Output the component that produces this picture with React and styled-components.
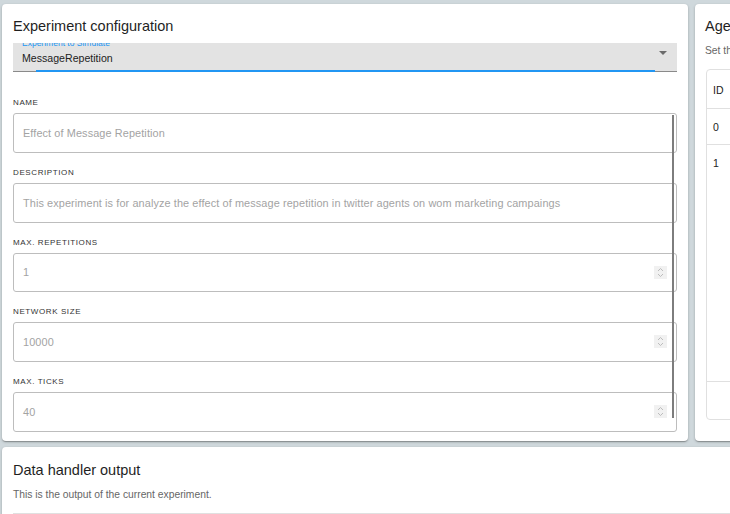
import React from "react";
import styled, { createGlobalStyle } from "styled-components";

const Global = createGlobalStyle`
  html, body { margin: 0; padding: 0; }
  body {
    background: #cfd8dc;
    font-family: "Liberation Sans", Arial, sans-serif;
    overflow: hidden;
    width: 730px;
    height: 514px;
  }
`;

const Page = styled.div`
  padding: 4px 0 0 2px;
  display: flex;
  flex-direction: column;
  gap: 6px;
  width: 1200px;
`;

const TopRow = styled.div`
  display: flex;
  gap: 7px;
  align-items: flex-start;
`;

const Card = styled.section`
  background: #fff;
  border-radius: 4px;
  box-shadow: 0 1px 3px rgba(0, 0, 0, 0.2), 0 1px 1px rgba(0, 0, 0, 0.14),
    0 2px 1px -1px rgba(0, 0, 0, 0.12);
  width: ${(p) => p.$w}px;
  height: ${(p) => (p.$h ? `${p.$h}px` : "auto")};
  display: flex;
  flex-direction: column;
  overflow: hidden;
  box-sizing: border-box;
`;

const Title = styled.h2`
  margin: 0;
  font-weight: 400;
  font-size: 14.5px;
  color: #1f1f1f;
  padding: ${(p) => p.$pad || "14px 11px 0"};
  line-height: 17px;
  white-space: nowrap;
`;

const Sub = styled.p`
  margin: 0;
  font-size: 10.3px;
  color: #666;
  padding: ${(p) => p.$pad || "10px 11px 0"};
  line-height: 12px;
  white-space: nowrap;
`;

const ScrollArea = styled.div`
  position: relative;
  margin-top: 8px;
  height: 390px;
  overflow: hidden;
  padding: 0 11px;
`;

const Scroller = styled.div`
  margin-top: -6px;
  display: flex;
  flex-direction: column;
`;

const Thumb = styled.div`
  position: absolute;
  right: 14px;
  top: 72px;
  width: 2px;
  height: 303px;
  background: #7d7d7d;
`;

const Select = styled.div`
  position: relative;
  height: 35px;
  background: #e3e3e3;
  border-radius: 3px 3px 0 0;
  box-sizing: border-box;
  padding: 1px 9px 0 9px;
  &::before {
    content: "";
    position: absolute;
    left: 0;
    right: 0;
    bottom: 0;
    height: 1px;
    background: #8a8a8a;
  }
  &::after {
    content: "";
    position: absolute;
    left: 23px;
    right: 22px;
    bottom: 0;
    height: 2px;
    background: #2196f3;
  }
`;

const SelectLabel = styled.div`
  font-size: 8.5px;
  color: #2196f3;
  line-height: 10px;
`;

const SelectValue = styled.div`
  font-size: 10.6px;
  color: #222;
  line-height: 14px;
  margin-top: 3px;
`;

const Caret = styled.span`
  position: absolute;
  right: 10px;
  top: 14px;
  width: 0;
  height: 0;
  border-left: 4px solid transparent;
  border-right: 4px solid transparent;
  border-top: 4px solid #6b6b6b;
`;

const Field = styled.div`
  display: flex;
  flex-direction: column;
  gap: 5px;
  margin-top: ${(p) => p.$mt || 14}px;
`;

const Label = styled.label`
  font-size: 8px;
  letter-spacing: 0.6px;
  color: #333;
  line-height: 11px;
  text-transform: uppercase;
`;

const InputBox = styled.div`
  position: relative;
  height: 39.75px;
  box-sizing: border-box;
  border: 1px solid #bdbdbd;
  border-radius: 3px;
  display: flex;
  align-items: center;
  padding: 0 9px;
  font-size: 10.9px;
  letter-spacing: 0.1px;
  color: #a3a3a3;
  white-space: nowrap;
`;

const Spin = styled.span`
  position: absolute;
  right: 9px;
  top: 12px;
  width: 13px;
  height: 13px;
  background: #f1f1f1;
  display: flex;
  align-items: center;
  justify-content: center;
`;

const TableBox = styled.div`
  margin: 12px 0 0 11px;
  height: 349px;
  border: 1px solid #e0e0e0;
  border-radius: 4px;
  display: flex;
  flex-direction: column;
`;

const Row = styled.div`
  height: ${(p) => p.$h}px;
  border-bottom: 1px solid #e0e0e0;
  box-sizing: border-box;
  font-size: 10.5px;
  color: #222;
  padding: ${(p) => p.$pt}px 0 0 6px;
  line-height: 12px;
`;

const Spacer = styled.div`
  flex: 1;
`;

const BottomLine = styled.div`
  height: 1px;
  background: #e0e0e0;
  margin: 12px 0 0 11px;
`;

const SpinIcon = () => (
  <svg width="9" height="11" viewBox="0 0 9 11">
    <path d="M2 4 L4.5 1.5 L7 4" fill="none" stroke="#b5b5b5" strokeWidth="0.9" />
    <path d="M2 7 L4.5 9.5 L7 7" fill="none" stroke="#b5b5b5" strokeWidth="0.9" />
  </svg>
);

const fields = [
  { label: "Name", value: "Effect of Message Repetition", mt: 25 },
  {
    label: "Description",
    value:
      "This experiment is for analyze the effect of message repetition in twitter agents on wom marketing campaings",
  },
  { label: "Max. Repetitions", value: "1", spin: true },
  { label: "Network size", value: "10000", spin: true },
  { label: "Max. Ticks", value: "40", spin: true },
];

export default function App() {
  return (
    <>
      <Global />
      <Page>
        <TopRow>
          <Card $w={686} $h={437}>
            <Title>Experiment configuration</Title>
            <ScrollArea>
              <Scroller>
                <Select>
                  <SelectLabel>Experiment to Simulate</SelectLabel>
                  <SelectValue>MessageRepetition</SelectValue>
                  <Caret />
                </Select>
                {fields.map((f) => (
                  <Field key={f.label} $mt={f.mt}>
                    <Label>{f.label}</Label>
                    <InputBox>
                      {f.value}
                      {f.spin && (
                        <Spin>
                          <SpinIcon />
                        </Spin>
                      )}
                    </InputBox>
                  </Field>
                ))}
              </Scroller>
              <Thumb />
            </ScrollArea>
          </Card>
          <Card $w={400} $h={437}>
            <Title $pad="14px 10px 0">Agents configuration</Title>
            <Sub $pad="10px 10px 0">Set the agents of the experiment</Sub>
            <TableBox>
              <Row $h={39} $pt={14}>ID</Row>
              <Row $h={36} $pt={12}>0</Row>
              <Row $h={237} $pt={12}>1</Row>
              <Spacer />
            </TableBox>
          </Card>
        </TopRow>
        <Card $w={1000}>
          <Title $pad="15px 11px 0">Data handler output</Title>
          <Sub>This is the output of the current experiment.</Sub>
          <BottomLine />
          <div style={{ height: 40 }} />
        </Card>
      </Page>
    </>
  );
}
